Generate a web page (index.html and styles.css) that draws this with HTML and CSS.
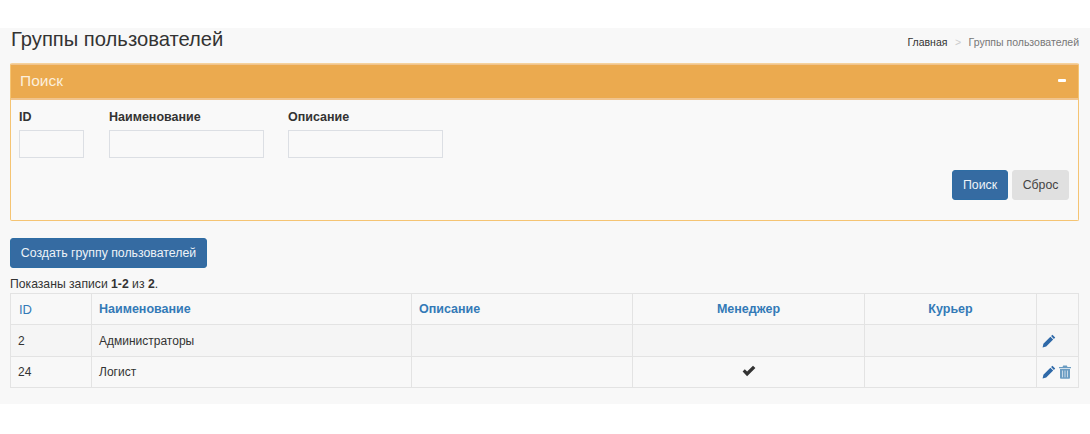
FILE: index.html
```html
<!DOCTYPE html>
<html lang="ru">
<head>
<meta charset="utf-8">
<title>Группы пользователей</title>
<link rel="stylesheet" href="styles.css">
</head>
<body>
<main class="page">
  <header class="page-head">
    <h1 class="title">Группы пользователей</h1>
    <nav class="crumbs"><a class="crumb-link">Главная</a><span class="crumb-sep">&gt;</span><span class="crumb-current">Группы пользователей</span></nav>
  </header>
  <section class="panel">
    <div class="panel-head"><span class="panel-title">Поиск</span><span class="collapse"></span></div>
    <div class="panel-body">
      <div class="fields">
        <label class="field field-id"><span class="field-label">ID</span><input class="input" type="text"></label>
        <label class="field"><span class="field-label">Наименование</span><input class="input" type="text"></label>
        <label class="field field-last"><span class="field-label">Описание</span><input class="input" type="text"></label>
      </div>
      <div class="actions">
        <button class="btn btn-primary" type="button">Поиск</button>
        <button class="btn btn-default" type="button">Сброс</button>
      </div>
    </div>
  </section>
  <button class="btn btn-primary btn-create" type="button">Создать группу пользователей</button>
  <p class="summary">Показаны записи <b>1-2</b> из <b>2</b>.</p>
  <table class="grid">
    <colgroup><col class="c1"><col class="c2"><col class="c3"><col class="c4"><col class="c5"><col class="c6"></colgroup>
    <thead>
      <tr><th class="th-id">ID</th><th>Наименование</th><th>Описание</th><th class="center">Менеджер</th><th class="center">Курьер</th><th></th></tr>
    </thead>
    <tbody>
      <tr class="odd"><td>2</td><td>Администраторы</td><td></td><td></td><td></td>
        <td class="ops"><svg class="icon" viewBox="0 0 14 14"><path fill="#2f69a8" d="M10.4.8l2.8 2.8-1.3 1.3-2.8-2.8zM8.4 2.8l2.8 2.8-7 7L.6 13.400l.8-3.600z"/></svg></td></tr>
      <tr class="even"><td>24</td><td>Логист</td><td></td>
        <td class="center"><svg class="check" viewBox="0 0 14 12"><path fill="#333" d="M0.600 6.400L2.800 4.300 5.100 6.600 11 .8l2.400 2.200-8.300 8.200z"/></svg></td><td></td>
        <td class="ops"><svg class="icon" viewBox="0 0 14 14"><path fill="#2f69a8" d="M10.4.8l2.8 2.8-1.3 1.300-2.800-2.800zM8.400 2.800l2.800 2.800-7 7L.6 13.400l.8-3.600z"/></svg><svg class="icon trash" viewBox="0 0 12 14"><path fill="#6a9cc2" d="M4.200.4h3.600l.7 1.500H12v1.300H0V1.900h3.500zM1 4h10v8.800q0 .9-.9.900H1.900q-.9 0-.9-.9z"/><path stroke="#dfe9f1" stroke-width=".8" d="M3.500 5.500v6.800M6 5.500v6.800M8.500 5.500v6.800"/></svg></td></tr>
    </tbody>
  </table>
</main>
</body>
</html>
```
FILE: styles.css
```css
* { box-sizing: border-box; }
html, body { margin: 0; padding: 0; background: #fff; }
body { font-family: "Liberation Sans", Arial, sans-serif; font-size: 12px; color: #333; }
.page { margin-top: 28px; height: 376px; background: #f8f8f8; padding: 0 11px 0 10px; }
.page-head { display: flex; justify-content: space-between; align-items: flex-start; height: 35px; }
.title { margin: 0; font-size: 20.2px; font-weight: 400; line-height: 22px; padding-left: 1px; color: #333; }
.crumbs { font-size: 10.5px; line-height: 14px; padding-top: 7px; color: #777; }
.crumb-link { color: #333; }
.crumb-sep { margin: 0 7.5px; color: #ccc; }
.panel { height: 158px; border: 1px solid #f5c473; border-top-color: #f6d29c; border-radius: 2px; background: #f9f9f9; display: flex; flex-direction: column; }
.panel-head { height: 36px; background: #ebaa4f; border-top: 1px solid #f0c48e; border-bottom: 2px solid #f0c48e; display: flex; justify-content: space-between; align-items: center; padding: 0 12px 0 9px; color: #fff; }
.panel-title { font-size: 15.5px; line-height: 20px; margin-bottom: 1px; color: #fcefdc; }
.collapse { width: 8px; height: 3px; background: #fff; border-radius: 1px; margin-bottom: 3px; }
.panel-body { padding: 9px 8px 0; flex: 1; display: flex; flex-direction: column; }
.fields { display: flex; gap: 25px; }
.field { display: flex; flex-direction: column; width: 155px; }
.field-id { width: 65px; }
.field-last { margin-left: -1px; }
.field-label { font-size: 12.500px; font-weight: 700; line-height: 16px; margin-bottom: 5px; }
.input { height: 28px; width: 100%; border: 1px solid #dcdfe4; background: #f9f9f9; padding: 0; }
.actions { display: flex; justify-content: flex-end; gap: 4px; margin-top: 12px; padding-right: 1px; }
.btn { height: 30px; border: 1px solid transparent; border-radius: 3px; font: 12.3px "Liberation Sans", Arial, sans-serif; padding: 0; width: 56px; }
.btn-primary { background: #356ba2; border-color: #2e6da4; color: #eef3f8; }
.btn-default { background: #e0e0e0; border-color: #e0e0e0; color: #444; width: 57px; }
.btn-create { display: block; margin-top: 17px; width: 197px; }
.summary { margin: 0; font-size: 12.2px; line-height: 14px; padding-top: 9px; height: 25px; }
.grid { width: 1068px; border-collapse: collapse; table-layout: fixed; font-size: 12px; }
.c1 { width: 81px; } .c2 { width: 320px; } .c3 { width: 221px; } .c4 { width: 232px; } .c5 { width: 172px; } .c6 { width: 42px; }
.grid th, .grid td { border: 1px solid #e3e3e3; padding: 0 7px; text-align: left; vertical-align: middle; }
.grid th { height: 31px; color: #337ab7; font-size: 12.500px; font-weight: 700; }
.grid .th-id { font-weight: 400; font-size: 13px; padding-left: 8px; }
.grid td { height: 32px; }
.grid .even td { height: 31px; }
.grid .center { text-align: center; }
.odd td { background: #f5f5f5; }
.grid .ops { padding: 0 0 0 5px; white-space: nowrap; font-size: 0; }
.icon { width: 14px; height: 14px; vertical-align: middle; }
.trash { width: 12px; margin-left: 3px; }
.check { width: 14px; height: 12px; vertical-align: middle; margin-bottom: 2px; }
```
